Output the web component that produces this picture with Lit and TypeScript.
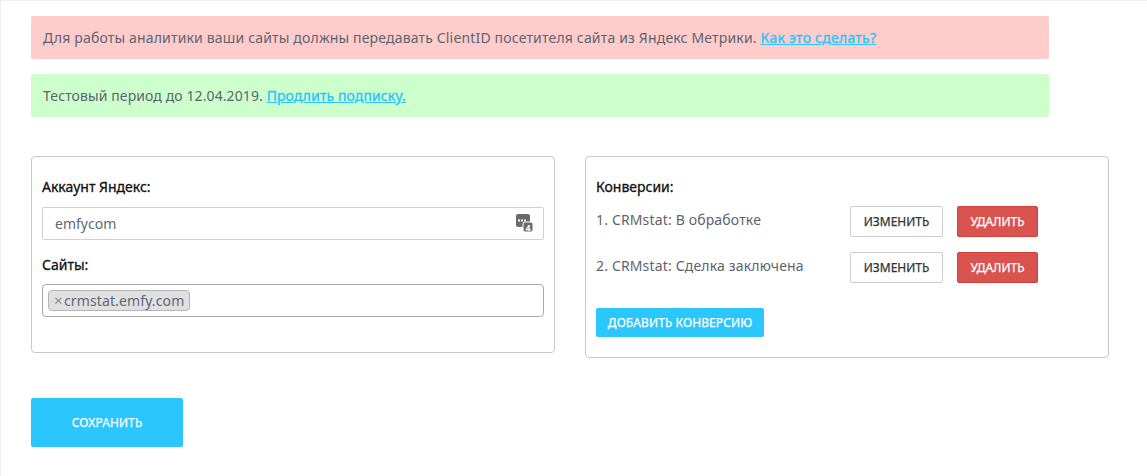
import { LitElement, html, css } from "lit";
import { customElement } from "lit/decorators.js";

@customElement("app-root")
export class AppRoot extends LitElement {
  static styles = css`
    :host {
      display: block;
      box-sizing: border-box;
      height: 476px;
      padding: 15px 0 0 30px;
      border-top: 1px solid #edf1f5;
      border-left: 1px solid #edf1f5;
      background: #fff;
      font-family: "Noto Sans", sans-serif;
      font-size: 14px;
      color: #5d6470;
    }
    * { box-sizing: border-box; }
    .alert {
      width: 1018px;
      height: 43px;
      border-radius: 2px;
      padding: 0 12px;
      display: flex;
      align-items: center;
      white-space: pre;
      line-height: 20px;
    }
    .alert + .alert { margin-top: 15px; }
    .red { background: #ffcccc; letter-spacing: 0.17px; }
    .green { background: #ccffcc; letter-spacing: 0.1px; }
    a { color: #2bc4fb; font-weight: 400; -webkit-text-stroke: 0.35px #2bc4fb; text-decoration: underline; }
    .red a { letter-spacing: 0.25px; }
    .cards { display: flex; align-items: flex-start; gap: 30px; margin-top: 39px; }
    .card {
      width: 524px;
      border: 1px solid #c8c8c8;
      border-radius: 4px;
      padding: 20px 10px 0;
    }
    .left { height: 197px; }
    .right { height: 202px; }
    .label { color: #111; -webkit-text-stroke: 0.3px #111; line-height: 20px; height: 20px; }
    .input {
      margin-top: 10px;
      height: 33px;
      border: 1px solid #d0d0d0;
      border-radius: 2px;
      padding: 0 12px;
      display: flex;
      align-items: center;
      justify-content: space-between;
      color: #5d6878;
    }
    .input svg { margin-right: -3px; display: block; }
    .left .label.second { margin-top: 15px; }
    .select {
      margin-top: 9px;
      height: 33px;
      border: 1px solid #a9a9a9;
      border-radius: 4px;
      padding: 5px;
      display: flex;
      align-items: flex-start;
    }
    .tag {
      height: 21px;
      width: 142px;
      background: #e0e0e0;
      border: 1px solid #b5b5b5;
      border-radius: 4px;
      display: flex;
      align-items: center;
      padding-left: 5px;
      line-height: 19px;
      font-size: 14px;
      letter-spacing: 0.12px;
      color: #5d6878;
      white-space: nowrap;
    }
    .tag .x { color: #888; font-size: 15px; width: 10px; flex: none; line-height: 19px; }
    .row { display: flex; align-items: flex-start; height: 31px; margin-bottom: 15px; }
    .rows { margin-top: 9px; }
    .row .name { width: 254px; line-height: 20px; padding-top: 4px; white-space: nowrap; letter-spacing: 0.16px; }
    .btn {
      height: 31px;
      border-radius: 2px;
      display: flex;
      align-items: center;
      justify-content: center;
      font-size: 12px;
      -webkit-text-stroke: 0.25px currentColor;
      white-space: nowrap;
    }
    .edit { width: 93px; background: #fff; border: 1px solid #ccc; color: #333; margin-right: 14px; }
    .del { width: 81px; background: #d9534f; border: 1px solid #d43f3a; color: #fff; }
    .add {
      width: 168px;
      height: 29px;
      background: #2bc6fb;
      color: #fff;
      border-radius: 2px;
      margin-top: 25px;
      display: flex;
      align-items: center;
      justify-content: center;
      font-size: 12px;
      letter-spacing: 0.1px;
      -webkit-text-stroke: 0.25px currentColor;
      white-space: nowrap;
    }
    .save {
      margin-top: 40px;
      width: 152px;
      height: 49px;
      background: #2bc6fb;
      color: #fff;
      border-radius: 2px;
      display: flex;
      align-items: center;
      justify-content: center;
      font-size: 12px;
      letter-spacing: 0.1px;
      -webkit-text-stroke: 0.25px currentColor;
    }
  `;

  private icon() {
    return html`<svg width="18" height="19" viewBox="0 0 18 19">
      <rect x="0" y="0" width="14" height="13" rx="2" fill="#6b6b6b"></rect>
      <path d="M2 6.5h2M5 6.5h2M8 6.5h2" stroke="#fff" stroke-width="2" fill="none"></path>
      <rect x="7" y="8" width="10" height="10" rx="2" fill="#6b6b6b" stroke="#fff" stroke-width="1"></rect>
      <text x="12" y="16.5" text-anchor="middle" font-family="Open Sans, sans-serif" font-size="9" font-weight="700" fill="#fff">4</text>
    </svg>`;
  }

  private row(name: string) {
    return html`<div class="row">
      <div class="name">${name}</div>
      <div class="btn edit">ИЗМЕНИТЬ</div>
      <div class="btn del">УДАЛИТЬ</div>
    </div>`;
  }

  render() {
    return html`
      <div class="alert red">Для работы аналитики ваши сайты должны передавать ClientID посетителя сайта из Яндекс Метрики. <a href="#">Как это сделать?</a></div>
      <div class="alert green">Тестовый период до 12.04.2019. <a href="#">Продлить подписку.</a></div>
      <div class="cards">
        <div class="card left">
          <div class="label">Аккаунт Яндекс:</div>
          <div class="input"><span>emfycom</span>${this.icon()}</div>
          <div class="label second">Сайты:</div>
          <div class="select">
            <div class="tag"><span class="x">×</span><span>crmstat.emfy.com</span></div>
          </div>
        </div>
        <div class="card right">
          <div class="label">Конверсии:</div>
          <div class="rows">
            ${this.row("1. CRMstat: В обработке")}
            ${this.row("2. CRMstat: Сделка заключена")}
          </div>
          <div class="add">ДОБАВИТЬ КОНВЕРСИЮ</div>
        </div>
      </div>
      <div class="save">СОХРАНИТЬ</div>
    `;
  }
}
